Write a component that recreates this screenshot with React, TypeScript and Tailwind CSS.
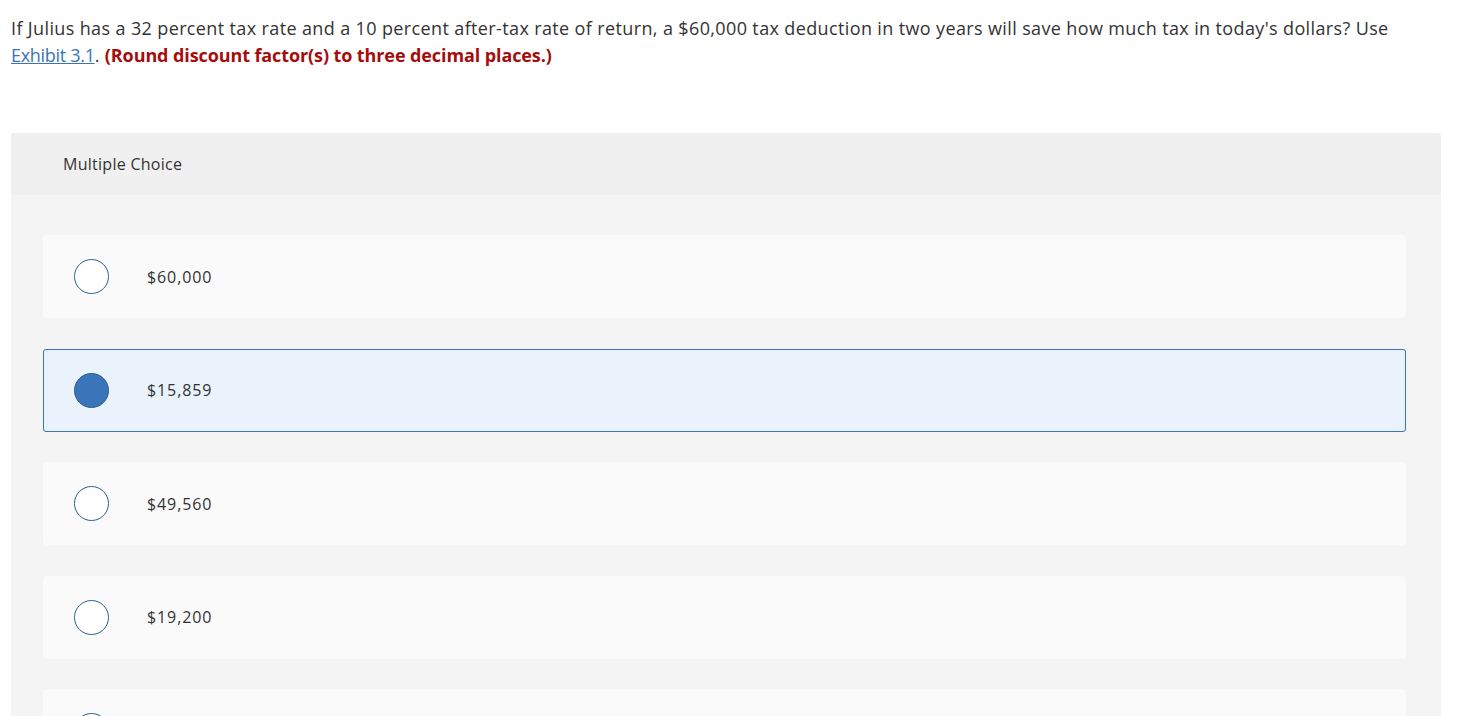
import React from "react";

const options = [
  { label: "$60,000", selected: false },
  { label: "$15,859", selected: true },
  { label: "$49,560", selected: false },
  { label: "$19,200", selected: false },
  { label: "$45,000", selected: false },
];

export default function App() {
  return (
    <div
      className="min-h-screen bg-white text-[#333333]"
      style={{ fontFamily: "'Open Sans', Lato, sans-serif" }}
    >
      <div className="pl-[11px] pr-[36px] pt-[15px]">
        <p className="text-[18px] leading-[27px] text-[#333] tracking-[0.37px]">
          If Julius has a 32 percent tax rate and a 10 percent after-tax rate of return, a $60,000 tax deduction in two years will save how much tax in today's dollars? Use{" "}
          <a className="text-[#3b74b8] underline tracking-[-0.3px]">Exhibit 3.1</a>.{" "}
          <strong className="font-bold tracking-[-0.1px] text-[#a50d0d]">(Round discount factor(s) to three decimal places.)</strong>
        </p>
        <div className="mt-[64px] rounded-t-[3px] bg-[#f4f4f4]">
          <div className="flex h-[62px] items-center rounded-t-[3px] bg-[#f0f0f0] pl-[52px] text-[16px] tracking-[0.27px]">
            Multiple Choice
          </div>
          <div className="flex flex-col gap-[30.5px] pl-[32px] pr-[35px] pt-[40px] pb-[40px]">
            {options.map((o) => (
              <div
                key={o.label}
                className={
                  o.selected
                    ? "flex h-[83px] items-center rounded-[3px] border border-[#3a75b9] bg-[#eaf2fb] pl-[30px]"
                    : "flex h-[83px] items-center rounded-[4px] bg-[#fafafa] pl-[31px]"
                }
              >
                <div
                  className={
                    o.selected
                      ? "h-[35px] w-[35px] rounded-full border border-[#2d5f93] bg-[#3a75b9]"
                      : "h-[35px] w-[35px] rounded-full border-[1.5px] border-[#2d5f93] bg-white"
                  }
                />
                <span className="ml-[38px] text-[16px] tracking-[0.9px] text-[#333]">{o.label}</span>
              </div>
            ))}
          </div>
        </div>
      </div>
    </div>
  );
}
